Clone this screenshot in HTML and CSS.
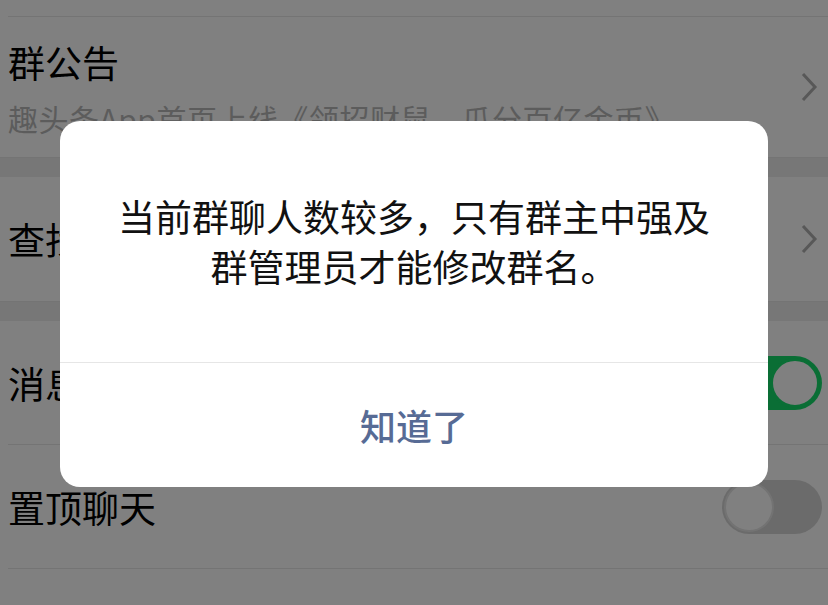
FILE: index.html
```html
<!DOCTYPE html>
<html lang="zh-CN">

<head>
    <meta charset="UTF-8">
    <title>群聊信息</title>
    <link rel="stylesheet" href="styles.css">
</head>

<body>

    <div class="settings">
        <!-- 上一行的尾部 -->
        <div class="row stub"></div>

        <div class="row notice">
            <div class="notice-text">
                <div class="row-title">群公告</div>
                <div class="row-sub">趣头条App首页上线《领招财鼠，瓜分百亿金币》</div>
            </div>
            <svg class="chevron" width="18" height="30" viewBox="0 0 18 30">
                <polyline points="3,2 15,15 3,28" />
            </svg>
        </div>

        <div class="gap"></div>

        <div class="row single">
            <div class="row-title">查找聊天记录</div>
            <svg class="chevron" width="18" height="30" viewBox="0 0 18 30">
                <polyline points="3,2 15,15 3,28" />
            </svg>
        </div>

        <div class="gap"></div>

        <div class="row single line">
            <div class="row-title">消息免打扰</div>
            <div class="switch on"><span class="knob"></span></div>
        </div>

        <div class="row single line">
            <div class="row-title">置顶聊天</div>
            <div class="switch"><span class="knob"></span></div>
        </div>

        <div class="row last"></div>
    </div>

    <!-- 弹窗 -->
    <div class="dialog">
        <div class="dialog-body">
            当前群聊人数较多，只有群主中强及<br>
            群管理员才能修改群名。
        </div>
        <div class="dialog-btn">知道了</div>
    </div>

</body>

</html>
```

FILE: styles.css
```css
html {
    overflow: hidden;
}

body {
    margin: 0;
    width: 828px;
    height: 605px;
    overflow: hidden;
    background: #808080;
    font-family: "Noto Sans CJK SC", "Noto Sans", sans-serif;
    color: #000;
}

.settings {
    display: flex;
    flex-direction: column;
}

/* 每一行 */
.row {
    display: flex;
    align-items: center;
    justify-content: space-between;
    margin-left: 8px;
    padding-right: 6px;
    box-sizing: border-box;
}

.row.stub {
    height: 17px;
    border-bottom: 1px solid #747474;
}

.row.notice {
    height: 140px;
}

.notice-text {
    display: flex;
    flex-direction: column;
    padding-top: 4px;
}

.row.single {
    height: 124px;
}

.row.last {
    height: 36px;
}

.row.line {
    border-bottom: 1px solid #747474;
}

.row-title {
    font-size: 37px;
    line-height: 44px;
}

.row-sub {
    margin-top: 14px;
    font-size: 30px;
    line-height: 40px;
    color: #5c5c5c;
    white-space: nowrap;
    letter-spacing: 0.5px;
}

.chevron {
    fill: none;
    stroke: #585858;
    stroke-width: 3;
    margin-right: 4px;
}

/* 分组间隔 */
.gap {
    height: 20px;
    background: #777;
    border-top: 1px solid #747474;
    box-sizing: border-box;
}

/* 开关 */
.switch {
    width: 100px;
    height: 54px;
    border-radius: 27px;
    background: #6b6b6b;
    display: flex;
    align-items: center;
    padding: 2px;
    box-sizing: border-box;
}

.switch .knob {
    width: 50px;
    height: 50px;
    border-radius: 50%;
    background: #808080;
    box-sizing: border-box;
    border: 2px solid #737373;
}

.switch.on {
    background: #0a6e35;
    justify-content: flex-end;
}

.switch.on .knob {
    border: 3px solid #0a6e35;
}

/* 弹窗 */
.dialog {
    position: absolute;
    left: 60px;
    top: 121px;
    width: 708px;
    height: 366px;
    background: #fff;
    border-radius: 20px;
    display: flex;
    flex-direction: column;
}

.dialog-body {
    height: 242px;
    box-sizing: border-box;
    padding-top: 70px;
    text-align: center;
    font-size: 37px;
    line-height: 50px;
    color: #111;
    border-bottom: 1px solid #e6e6e6;
}

.dialog-btn {
    flex: 1;
    display: flex;
    align-items: center;
    justify-content: center;
    font-size: 36px;
    font-weight: 500;
    color: #576b95;
}
```
